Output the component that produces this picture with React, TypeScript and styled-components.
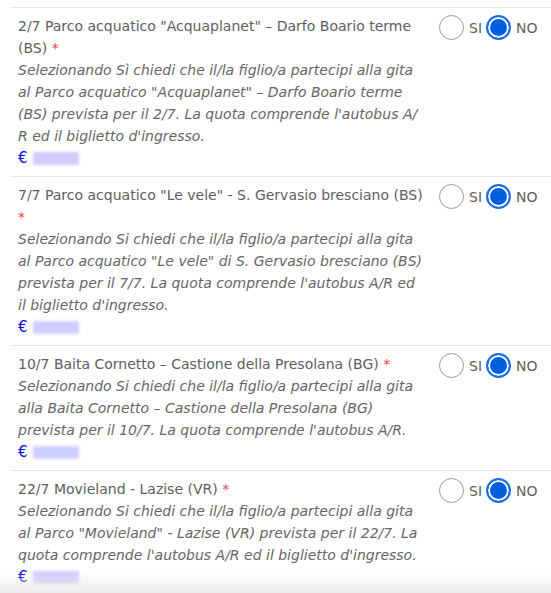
import styled, { createGlobalStyle } from "styled-components";

const GlobalStyle = createGlobalStyle`
  html, body {
    margin: 0;
    padding: 0;
    background: #fff;
  }
  body {
    font-family: "DejaVu Sans", "Liberation Sans", sans-serif;
    color: #5c5c5c;
  }
`;

type Trip = {
  id: string;
  title: string;
  description: string;
};

// \u200B lets "A/R" break after the slash, as it does in the original
const trips: Trip[] = [
  {
    id: "acquaplanet",
    title: "2/7 Parco acquatico \"Acquaplanet\" – Darfo Boario terme (BS)",
    description:
      "Selezionando Sì chiedi che il/la figlio/a partecipi alla gita al Parco acquatico \"Acquaplanet\" – Darfo Boario terme (BS) prevista per il 2/7. La quota comprende l'autobus A/\u200BR ed il biglietto d'ingresso.",
  },
  {
    id: "levele",
    title: "7/7 Parco acquatico \"Le vele\" - S. Gervasio bresciano (BS)",
    description:
      "Selezionando Si chiedi che il/la figlio/a partecipi alla gita al Parco acquatico \"Le vele\" di S. Gervasio bresciano (BS) prevista per il 7/7. La quota comprende l'autobus A/R ed il biglietto d'ingresso.",
  },
  {
    id: "cornetto",
    title: "10/7 Baita Cornetto – Castione della Presolana (BG)",
    description:
      "Selezionando Si chiedi che il/la figlio/a partecipi alla gita alla Baita Cornetto – Castione della Presolana (BG) prevista per il 10/7. La quota comprende l'autobus A/R.",
  },
  {
    id: "movieland",
    title: "22/7 Movieland - Lazise (VR)",
    description:
      "Selezionando Si chiedi che il/la figlio/a partecipi alla gita al Parco \"Movieland\" - Lazise (VR) prevista per il 22/7. La quota comprende l'autobus A/R ed il biglietto d'ingresso.",
  },
];

export default function App() {
  return (
    <>
      <GlobalStyle />
      <List>
        {trips.map((trip) => (
          <TripRow key={trip.id} trip={trip} />
        ))}
      </List>
      <BottomFade />
    </>
  );
}

const TripRow = ({ trip }: { trip: Trip }) => {
  return (
    <Row>
      <Info>
        <Title>
          {trip.title} <Required>*</Required>
        </Title>
        <Description>{trip.description}</Description>
        <Price>
          <Euro>€</Euro>
          <HiddenAmount />
        </Price>
      </Info>
      <Choices>
        <Choice>
          <Radio $checked={false} />
          <ChoiceLabel>SI</ChoiceLabel>
        </Choice>
        <Choice>
          <Radio $checked />
          <ChoiceLabel>NO</ChoiceLabel>
        </Choice>
      </Choices>
    </Row>
  );
};

const List = styled.div`
  margin: 7px 0 0 10px;
  display: flex;
  flex-direction: column;
`;

const Row = styled.div`
  display: flex;
  align-items: flex-start;
  border-top: 1px solid #e6e6e6;
  padding: 7px 0 7px 8px;
`;

const Info = styled.div`
  width: 408px;
  flex-shrink: 0;
  display: flex;
  flex-direction: column;
  font-size: 14px;
  line-height: 22px;
`;

const Title = styled.div`
  color: #5e5e5e;
`;

const Required = styled.span`
  color: #e8413c;
`;

const Description = styled.div`
  font-style: italic;
  color: #666;
`;

const Price = styled.div`
  display: flex;
  align-items: center;
  gap: 5px;
  height: 22px;
`;

const Euro = styled.span`
  color: #0a0af0;
  font-size: 15px;
  line-height: 22px;
`;

const HiddenAmount = styled.span`
  display: inline-block;
  width: 46px;
  height: 13px;
  background: #cfcfff;
  filter: blur(1.5px);
`;

const Choices = styled.div`
  display: flex;
  align-items: center;
  margin-left: 13px;
  gap: 4px;
`;

const Choice = styled.label`
  display: flex;
  align-items: center;
  gap: 5px;
`;

const Radio = styled.span<{ $checked: boolean }>`
  box-sizing: border-box;
  width: 25px;
  height: 25px;
  border-radius: 50%;
  border: ${(p) => (p.$checked ? "2px solid #1a6fe8" : "1.5px solid #9a9a9a")};
  background: ${(p) => (p.$checked ? "#005fe0" : "#fff")};
  box-shadow: ${(p) => (p.$checked ? "inset 0 0 0 2px #fff" : "none")};
`;

const ChoiceLabel = styled.span`
  font-size: 14px;
  color: #5e5e5e;
`;

const BottomFade = styled.div`
  position: fixed;
  left: 0;
  right: 0;
  bottom: 0;
  height: 20px;
  background: linear-gradient(to bottom, rgba(240, 240, 240, 0), rgba(232, 232, 232, 0.9));
  pointer-events: none;
`;
